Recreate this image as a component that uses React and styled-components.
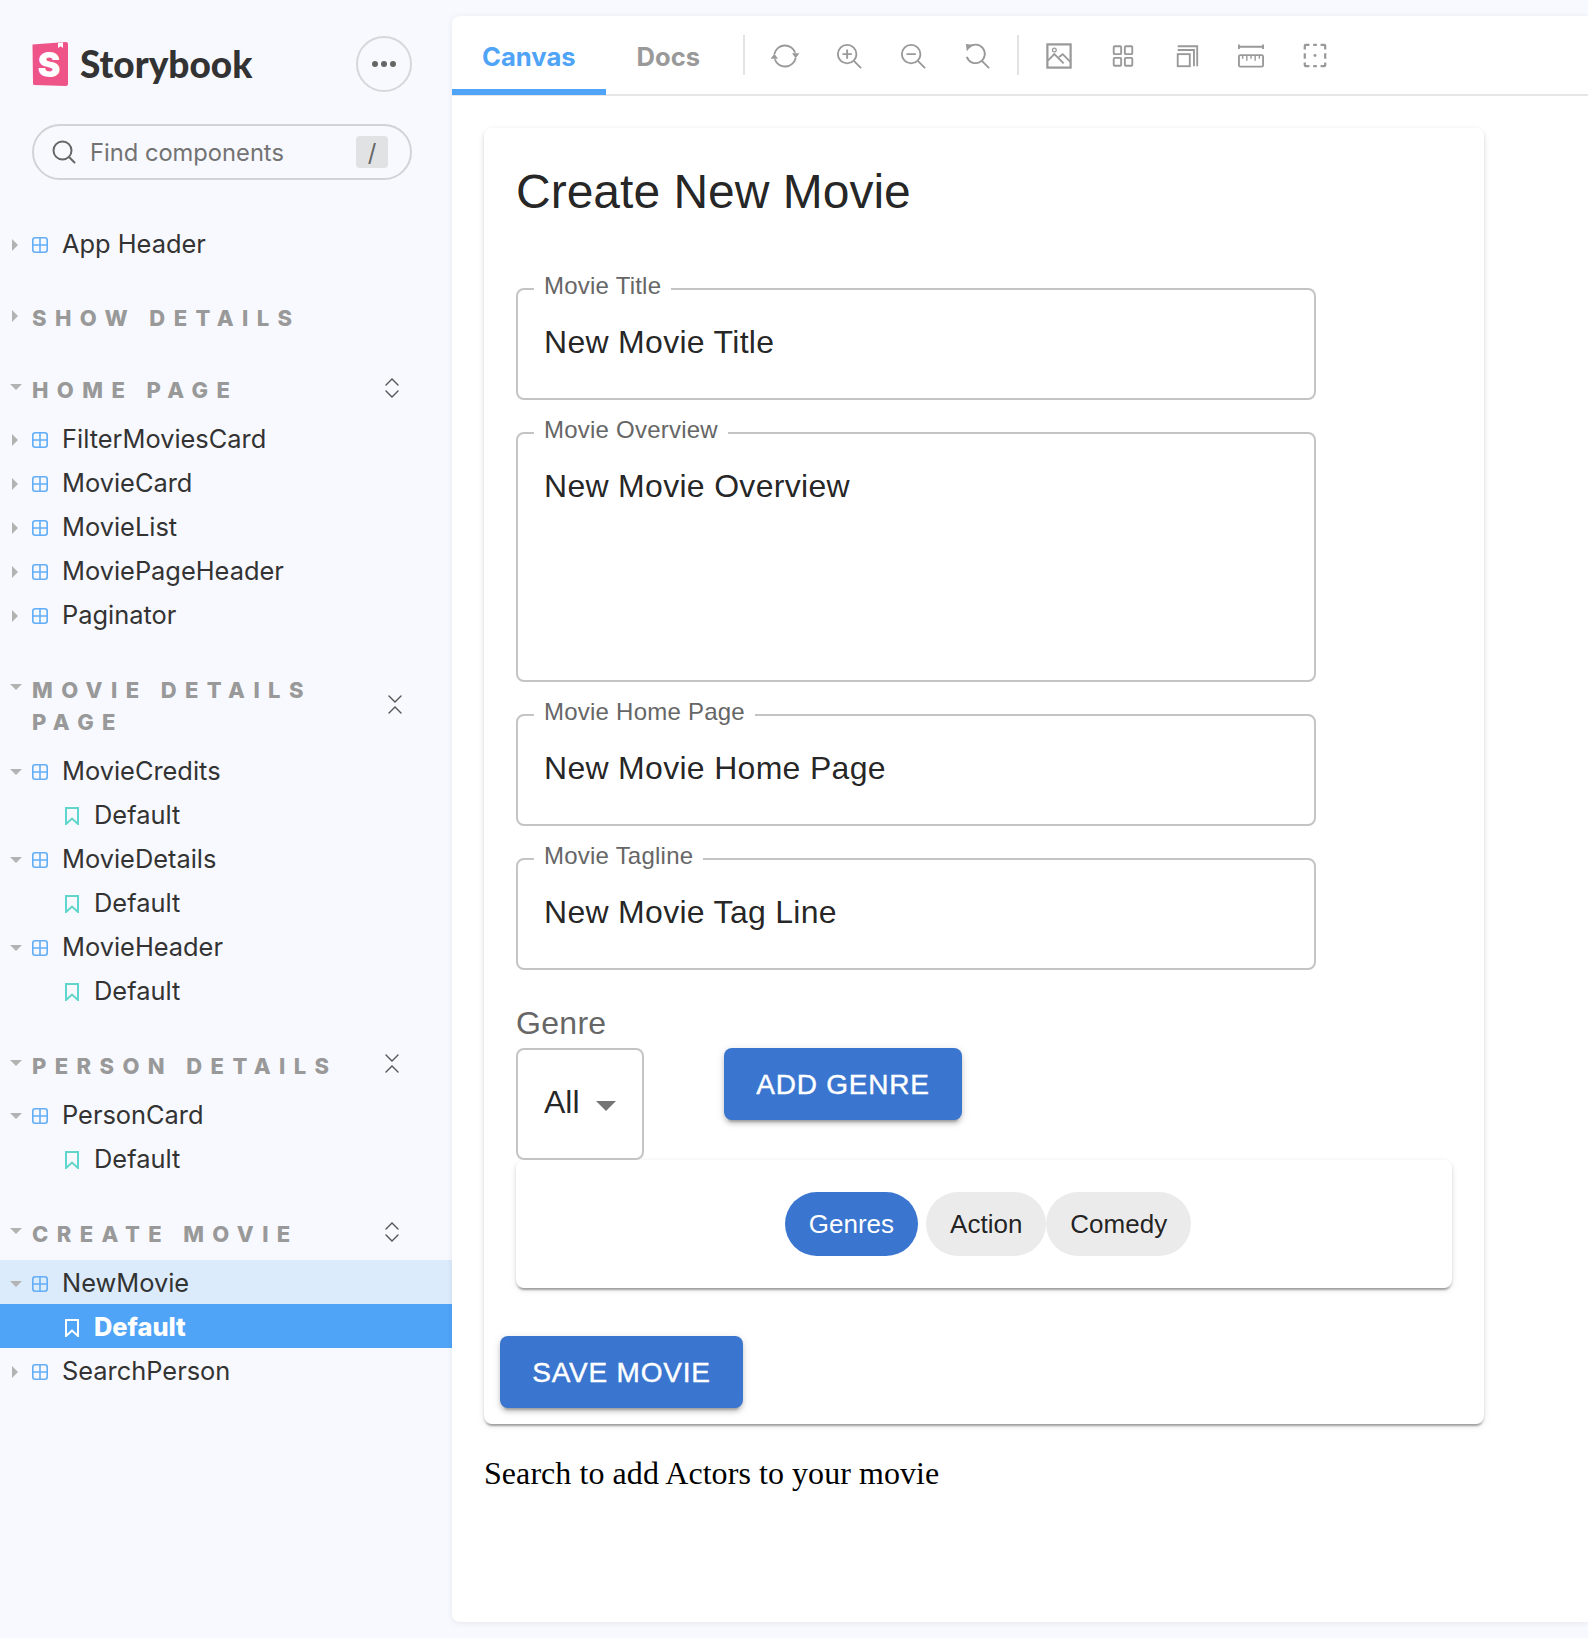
import React from "react";
import styled, { createGlobalStyle } from "styled-components";

const GlobalStyle = createGlobalStyle`
    html, body {
        margin: 0;
        padding: 0;
        background: #f8f9fe;
    }
    * {
        box-sizing: border-box;
    }
`

const PAGE = styled.div`
    display: flex;
    min-height: 1638px;
    background: #f8f9fe;
    font-family: "Inter", "Liberation Sans", sans-serif;
`

const SIDEBAR = styled.aside`
    width: 452px;
    flex-shrink: 0;
    padding-top: 36px;
`

const BRAND = styled.div`
    display: flex;
    align-items: center;
    justify-content: space-between;
    padding: 0 40px 0 32px;
    height: 56px;
`

const LOGO = styled.div`
    display: flex;
    align-items: center;
    gap: 12px;
`

const BRAND_NAME = styled.span`
    padding-bottom: 2px;
    font-family: "Lato", "Inter", sans-serif;
    font-weight: 900;
    font-size: 37px;
    color: #333;
`

const MENU_BUTTON = styled.button`
    width: 56px;
    height: 56px;
    border-radius: 50%;
    border: 2px solid #d6d7d9;
    background: transparent;
    display: flex;
    align-items: center;
    justify-content: center;
    gap: 3px;
    padding: 0;
`

const DOT = styled.span`
    width: 6px;
    height: 6px;
    border-radius: 50%;
    background: #666;
`

const SEARCH = styled.div`
    display: flex;
    align-items: center;
    height: 56px;
    margin: 32px 40px 41px 32px;
    padding: 0 22px 0 18px;
    border: 2px solid #d2d3d6;
    border-radius: 28px;
    font-size: 23.7px;
    color: #737373;
`

const SEARCH_TEXT = styled.span`
    flex: 1;
    margin-left: 14px;
`

const KEY = styled.span`
    width: 32px;
    height: 32px;
    border-radius: 4px;
    background: #e1e2e4;
    display: flex;
    align-items: center;
    justify-content: center;
    font-size: 24px;
    color: #666;
`

const SECTION = styled.section`
    margin-top: ${(props) => props.$top}px;
`

const HEADING = styled.div`
    display: flex;
    align-items: center;
    justify-content: space-between;
    padding-right: ${(props) => props.$wrapped ? "50px" : "53px"};
    margin-bottom: 10px;
    position: relative;
`

const HEADING_TEXT = styled.h2`
    margin: 0;
    padding-left: 32px;
    max-width: 352px;
    font-size: 22px;
    line-height: 32px;
    font-weight: 800;
    letter-spacing: 8.4px;
    text-transform: uppercase;
    color: #999;
`

const caretDown = `
    width: 0;
    height: 0;
    border-left: 6px solid transparent;
    border-right: 6px solid transparent;
    border-top: 6px solid #b3b3b3;
`

const caretRight = `
    width: 0;
    height: 0;
    margin-left: 2px;
    border-top: 6px solid transparent;
    border-bottom: 6px solid transparent;
    border-left: 6px solid #b3b3b3;
`

const HEADING_CARET = styled.span`
    position: absolute;
    left: 10px;
    top: ${(props) => props.$open ? "10px" : "8px"};
    ${(props) => props.$open ? caretDown : caretRight}
`

const TOGGLE = styled.span`
    display: flex;
    margin-top: ${(props) => props.$wrapped ? "-4px" : "-5px"};
`

const ROW = styled.div`
    display: flex;
    align-items: center;
    height: 44px;
    padding-left: ${(props) => props.$story ? "65px" : "0"};
    background: ${(props) => props.$selected ? "#4fa4f7" : props.$active ? "#dcebfb" : "transparent"};
    color: ${(props) => props.$selected ? "#fff" : "#333"};
    font-size: 25.4px;
    font-weight: ${(props) => props.$selected ? 800 : 400};

    svg {
        margin-top: 4px;
    }
`

const ROW_CARET = styled.span`
    width: 32px;
    flex-shrink: 0;
    padding-left: 10px;
    padding-top: 4px;
`

const CARET = styled.span`
    display: block;
    ${(props) => props.$open ? caretDown : caretRight}
`

const ROW_LABEL = styled.span`
    margin-left: ${(props) => props.$story ? "15px" : "14px"};
`

const MAIN = styled.main`
    flex: 1;
    height: 1606px;
    margin-top: 16px;
    background: #fff;
    border-radius: 8px 0 0 8px;
    box-shadow: 0 1px 6px rgba(0, 0, 0, 0.08);
`

const TOOLBAR = styled.nav`
    display: flex;
    align-items: center;
    height: 80px;
    border-bottom: 2px solid #e6e6e6;
`

const TAB = styled.div`
    height: 80px;
    padding: 8px 30px 0 ${(props) => props.$active ? "30px" : "31px"};
    display: flex;
    align-items: center;
    font-size: 25.6px;
    font-weight: 700;
    color: ${(props) => props.$active ? "#4fa4f7" : "#999"};
    border-bottom: 6px solid ${(props) => props.$active ? "#4fa4f7" : "transparent"};
`

const DIVIDER = styled.span`
    width: 2px;
    height: 40px;
    margin: ${(props) => props.$first ? "0 8px 0 13px" : "0 8px"};
    background: #e3e3e3;
`

const TOOL = styled.span`
    width: 64px;
    height: 26px;
    margin-top: 2px;
    display: flex;
    justify-content: center;
    color: #999;

    svg {
        overflow: visible;
    }
`

const CONTENT = styled.div`
    padding: 32px;
`

const CARD = styled.div`
    width: 1000px;
    padding: 36px 32px 16px;
    background: #fff;
    border-radius: 8px;
    box-shadow: 0 4px 2px -2px rgba(0, 0, 0, 0.2), 0 2px 2px 0 rgba(0, 0, 0, 0.14), 0 2px 6px 0 rgba(0, 0, 0, 0.12);
    font-family: "Liberation Sans", Arial, sans-serif;
`

const TITLE = styled.h1`
    margin: 0 0 55px;
    font-size: 48px;
    line-height: 56px;
    font-weight: 400;
    color: rgba(0, 0, 0, 0.87);
`

const FIELDS = styled.div`
    display: flex;
    flex-direction: column;
    gap: 19px;
    width: 800px;
`

const FIELD = styled.fieldset`
    margin: 0;
    padding: 0 26px;
    border: 2px solid #c4c4c4;
    border-radius: 8px;
`

const LEGEND = styled.legend`
    margin-left: -10px;
    padding: 0 10px 6px;
    font-size: 24px;
    line-height: 22px;
    letter-spacing: 0.23px;
    color: #666;
`

const VALUE = styled.div`
    height: ${(props) => props.$tall ? "233px" : "95px"};
    padding-top: 21px;
    font-size: 32px;
    line-height: 37px;
    letter-spacing: 0.3px;
    color: rgba(0, 0, 0, 0.87);
`

const GENRE_LABEL = styled.div`
    margin-top: 35px;
    margin-bottom: 6px;
    font-size: 32px;
    line-height: 37px;
    letter-spacing: 0.3px;
    color: #666;
`

const GENRE_ROW = styled.div`
    display: flex;
    align-items: flex-start;
`

const SELECT = styled.div`
    width: 128px;
    height: 112px;
    padding: 0 0 4px 26px;
    display: flex;
    align-items: center;
    border: 2px solid #c4c4c4;
    border-radius: 8px;
    font-size: 32px;
    color: rgba(0, 0, 0, 0.87);
`

const SELECT_ARROW = styled.span`
    width: 0;
    height: 0;
    margin-left: 16px;
    margin-top: 8px;
    border-left: 10px solid transparent;
    border-right: 10px solid transparent;
    border-top: 10px solid #757575;
`

const BUTTON = styled.button`
    display: block;
    width: ${(props) => props.$width}px;
    height: 72px;
    padding: 2px 0 0;
    margin-left: ${(props) => props.$offset || 0}px;
    margin-top: ${(props) => props.$top || 0}px;
    border: none;
    border-radius: 8px;
    background: #3a75cf;
    color: #fff;
    font-family: "Liberation Sans", Arial, sans-serif;
    font-size: 28px;
    letter-spacing: 0.8px;
    -webkit-text-stroke: 0.4px #fff;
    text-transform: uppercase;
    box-shadow: 0 6px 2px -4px rgba(0, 0, 0, 0.2), 0 4px 4px 0 rgba(0, 0, 0, 0.14), 0 2px 10px 0 rgba(0, 0, 0, 0.12);
`

const CHIP_PAPER = styled.div`
    width: 936px;
    height: 128px;
    padding-left: 8px;
    display: flex;
    align-items: center;
    justify-content: center;
    background: #fff;
    border-radius: 8px;
    box-shadow: 0 4px 2px -2px rgba(0, 0, 0, 0.2), 0 2px 2px 0 rgba(0, 0, 0, 0.14), 0 2px 6px 0 rgba(0, 0, 0, 0.12);
`

const CHIP = styled.span`
    height: 64px;
    padding: 1px 24px 0;
    margin-right: ${(props) => props.$primary ? "8px" : "0"};
    display: flex;
    align-items: center;
    border-radius: 32px;
    font-size: 26px;
    background: ${(props) => props.$primary ? "#3a75cf" : "#ebebeb"};
    color: ${(props) => props.$primary ? "#fff" : "rgba(0, 0, 0, 0.87)"};
`

const SEARCH_HINT = styled.p`
    margin: 31px 0 0;
    font-family: "Liberation Serif", "Times New Roman", serif;
    font-size: 32px;
    line-height: 37px;
    letter-spacing: 0.06px;
    color: #000;
`

function StorybookLogo () {
    return (
        <svg width="36" height="44" viewBox="0 0 36 44">
            <path d="M0.5 2.5 L34 0 Q36 0 36 2 L36 42 Q36 44 34 44 L2 43 Q1 43 1 41 Z" fill="#ef5488" />
            <path d="M26 1 L26 6 L28.5 4.2 L31 6 L31 0.5 Z" fill="#fff" />
            <text x="17" y="35" textAnchor="middle" fontFamily="Inter, sans-serif" fontWeight="900" fontSize="34" fill="#fff">S</text>
        </svg>
    )
}

function SearchIcon () {
    return (
        <svg width="24" height="24" viewBox="0 0 24 24" fill="none" stroke="#666" strokeWidth="2" strokeLinecap="round">
            <circle cx="10.5" cy="10.5" r="9" />
            <path d="M17 17 L22.5 22.5" />
        </svg>
    )
}

function ComponentIcon ({color}) {
    return (
        <svg width="16" height="16" viewBox="0 0 16 16" fill="none" stroke={color || "#63aef8"} strokeWidth="1.6">
            <rect x="0.8" y="0.8" width="14.4" height="14.4" rx="2.5" />
            <path d="M8 1 V15 M1 8 H15" />
        </svg>
    )
}

function StoryIcon ({color}) {
    return (
        <svg width="14" height="18" viewBox="0 0 14 18" fill="none" stroke={color || "#5fd5cb"} strokeWidth="2">
            <path d="M1 1 H13 V17 L7 11.5 L1 17 Z" />
        </svg>
    )
}

function ExpandIcon () {
    return (
        <svg width="14" height="20" viewBox="0 0 14 20" fill="none" stroke="#555" strokeWidth="1.4" strokeLinecap="round">
            <path d="M1 7 L7 1 L13 7 M1 13 L7 19 L13 13" />
        </svg>
    )
}

function CollapseIcon () {
    return (
        <svg width="14" height="19" viewBox="0 0 14 19" fill="none" stroke="#555" strokeWidth="1.4" strokeLinecap="round">
            <path d="M1 1 L7 7 L13 1 M1 18 L7 12 L13 18" />
        </svg>
    )
}

const TOOL_ICONS = {
    sync: (
        <>
            <path d="M2.5 12 A11.7 11.7 0 0 1 25 10.5" />
            <path d="M25.5 16 A11.7 11.7 0 0 1 3 17.5" />
            <path d="M21.5 11 H29.5 L25.5 16.5 Z M-1.5 17 H6.5 L2.5 11.5 Z" fill="currentColor" stroke="none" />
        </>
    ),
    zoomIn: (
        <>
            <circle cx="12" cy="12" r="10" />
            <path d="M19.5 19.5 L27 27 M12 7 V17 M7 12 H17" />
        </>
    ),
    zoomOut: (
        <>
            <circle cx="12" cy="12" r="10" />
            <path d="M19.5 19.5 L27 27 M7 12 H17" />
        </>
    ),
    zoomReset: (
        <>
            <path d="M5 5 A10 10 0 1 1 3 15" />
            <path d="M19.5 19.5 L27 27" />
            <path d="M2 1 L9 2 L3 9 Z" fill="currentColor" stroke="none" />
        </>
    ),
    photo: (
        <>
            <rect x="1.5" y="1.5" width="25" height="25" strokeWidth="2.4" />
            <circle cx="9" cy="7.5" r="2" strokeWidth="1.4" />
            <path d="M2 19 L9 12 L19 22 M14 15 L18 12 L26 20" />
        </>
    ),
    grid: (
        <>
            <rect x="4" y="3.5" width="8" height="8.5" rx="1" />
            <rect x="16" y="3.5" width="8" height="8.5" rx="1" />
            <rect x="4" y="16" width="8" height="8.5" rx="1" />
            <rect x="16" y="16" width="8" height="8.5" rx="1" />
        </>
    ),
    outline: (
        <>
            <rect x="4" y="12" width="13" height="13" />
            <path d="M4 7.5 H21.5 V25 M4 3.5 H25 V25" />
        </>
    ),
    ruler: (
        <>
            <path d="M1 4 H27 M1 1.5 V6.5 M27 1.5 V6.5" />
            <rect x="1" y="13" width="26" height="12.5" rx="1.5" />
            <path d="M5 13 V17 M9.5 13 V19 M14 13 V17 M18.5 13 V19 M23 13 V17" strokeWidth="1.5" />
        </>
    ),
    measure: (
        <>
            <path d="M3 7 V3 Q3 2 4 2 H8 M12 2 H16 M20 2 H24 Q25 2 25 3 V7 M25 11 V17 M25 21 V24 Q25 25 24 25 H20 M16 25 H12 M8 25 H4 Q3 25 3 24 V21 M3 17 V11" strokeWidth="2.4" />
            <circle cx="14" cy="13.5" r="1.6" fill="currentColor" stroke="none" />
        </>
    )
}

function ToolIcon ({name}) {
    return (
        <TOOL>
            <svg width="26" height="26" viewBox="0 0 28 28" fill="none" stroke="currentColor" strokeWidth="2">
                {TOOL_ICONS[name]}
            </svg>
        </TOOL>
    )
}

function ComponentRow ({label, open, active}) {
    return (
        <ROW $active = {active}>
            <ROW_CARET><CARET $open = {open} /></ROW_CARET>
            <ComponentIcon />
            <ROW_LABEL>{label}</ROW_LABEL>
        </ROW>
    )
}

function StoryRow ({selected}) {
    return (
        <ROW $story $selected = {selected}>
            <StoryIcon color = {selected ? "#fff" : undefined} />
            <ROW_LABEL $story>Default</ROW_LABEL>
        </ROW>
    )
}

function Section ({title, top, open, wrapped, toggle, children}) {
    return (
        <SECTION $top = {top}>
            <HEADING $wrapped = {wrapped}>
                <HEADING_CARET $open = {open} />
                <HEADING_TEXT>{title}</HEADING_TEXT>
                {toggle && <TOGGLE $wrapped = {wrapped}>{toggle}</TOGGLE>}
            </HEADING>
            {children}
        </SECTION>
    )
}

function Field ({label, value, tall}) {
    return (
        <FIELD>
            <LEGEND>{label}</LEGEND>
            <VALUE $tall = {tall}>{value}</VALUE>
        </FIELD>
    )
}

function App () {
    return (
        <PAGE>
            <GlobalStyle />
            <SIDEBAR>
                <BRAND>
                    <LOGO>
                        <StorybookLogo />
                        <BRAND_NAME>Storybook</BRAND_NAME>
                    </LOGO>
                    <MENU_BUTTON><DOT /><DOT /><DOT /></MENU_BUTTON>
                </BRAND>
                <SEARCH>
                    <SearchIcon />
                    <SEARCH_TEXT>Find components</SEARCH_TEXT>
                    <KEY>/</KEY>
                </SEARCH>
                <ComponentRow label = "App Header" />
                <Section title = "Show details" top = {37} />
                <Section title = "Home page" top = {40} open toggle = {<ExpandIcon />}>
                    {["FilterMoviesCard", "MovieCard", "MovieList", "MoviePageHeader", "Paginator"].map((name) => (
                        <ComponentRow key = {name} label = {name} />
                    ))}
                </Section>
                <Section title = "Movie Details Page" top = {38} open wrapped toggle = {<CollapseIcon />}>
                    {["MovieCredits", "MovieDetails", "MovieHeader"].map((name) => (
                        <React.Fragment key = {name}>
                            <ComponentRow label = {name} open />
                            <StoryRow />
                        </React.Fragment>
                    ))}
                </Section>
                <Section title = "Person Details" top = {38} open toggle = {<CollapseIcon />}>
                    <ComponentRow label = "PersonCard" open />
                    <StoryRow />
                </Section>
                <Section title = "Create Movie" top = {38} open toggle = {<ExpandIcon />}>
                    <ComponentRow label = "NewMovie" open active />
                    <StoryRow selected />
                    <ComponentRow label = "SearchPerson" />
                </Section>
            </SIDEBAR>
            <MAIN>
                <TOOLBAR>
                    <TAB $active>Canvas</TAB>
                    <TAB>Docs</TAB>
                    <DIVIDER $first />
                    <ToolIcon name = "sync" />
                    <ToolIcon name = "zoomIn" />
                    <ToolIcon name = "zoomOut" />
                    <ToolIcon name = "zoomReset" />
                    <DIVIDER />
                    <ToolIcon name = "photo" />
                    <ToolIcon name = "grid" />
                    <ToolIcon name = "outline" />
                    <ToolIcon name = "ruler" />
                    <ToolIcon name = "measure" />
                </TOOLBAR>
                <CONTENT>
                    <CARD>
                        <TITLE>Create New Movie</TITLE>
                        <FIELDS>
                            <Field label = "Movie Title" value = "New Movie Title" />
                            <Field label = "Movie Overview" value = "New Movie Overview" tall />
                            <Field label = "Movie Home Page" value = "New Movie Home Page" />
                            <Field label = "Movie Tagline" value = "New Movie Tag Line" />
                        </FIELDS>
                        <GENRE_LABEL>Genre</GENRE_LABEL>
                        <GENRE_ROW>
                            <SELECT>All<SELECT_ARROW /></SELECT>
                            <BUTTON $width = {238} $offset = {80}>Add Genre</BUTTON>
                        </GENRE_ROW>
                        <CHIP_PAPER>
                            <CHIP $primary>Genres</CHIP>
                            <CHIP>Action</CHIP>
                            <CHIP>Comedy</CHIP>
                        </CHIP_PAPER>
                        <BUTTON $width = {243} $offset = {-16} $top = {48}>Save Movie</BUTTON>
                    </CARD>
                    <SEARCH_HINT>Search to add Actors to your movie</SEARCH_HINT>
                </CONTENT>
            </MAIN>
        </PAGE>
    )
}

export default App
